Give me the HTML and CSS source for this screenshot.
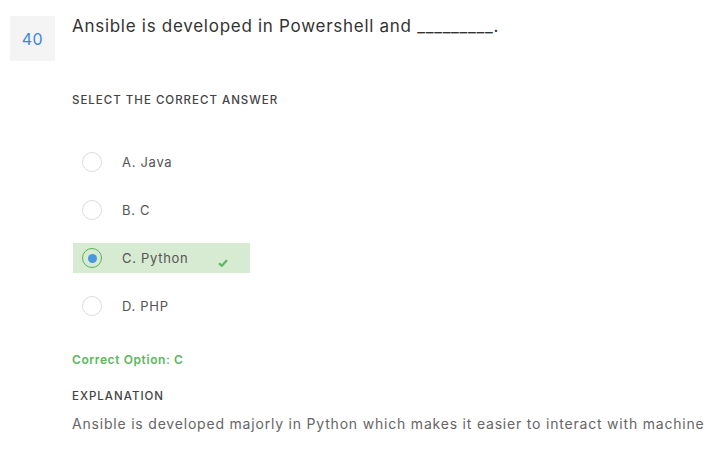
FILE: index.html
```html
<!DOCTYPE html>
<html>
<head>
<meta charset="utf-8">
<link rel="stylesheet" href="styles.css">
</head>
<body>
<div class="question">
  <div class="qnum">40</div>
  <div class="qbody">
    <div class="qtext">Ansible is developed in Powershell and _________.</div>
    <div class="label select-label">SELECT THE CORRECT ANSWER</div>
    <ul class="options">
      <li class="option"><span class="radio"></span><span class="opt-text">A. Java</span></li>
      <li class="option"><span class="radio"></span><span class="opt-text">B. C</span></li>
      <li class="option correct"><span class="radio checked"></span><span class="opt-text">C. Python</span>
        <svg class="check" width="10" height="8" viewBox="0 0 10 8"><path d="M1 4.2 L3.8 6.8 L9 1.2" fill="none" stroke="#5cb85c" stroke-width="2.2"/></svg>
      </li>
      <li class="option"><span class="radio"></span><span class="opt-text">D. PHP</span></li>
    </ul>
    <div class="correct-option">Correct Option: C</div>
    <div class="label expl-label">EXPLANATION</div>
    <div class="expl-text">Ansible is developed majorly in Python which makes it easier to interact with machine</div>
  </div>
</div>
</body>
</html>
```

FILE: styles.css
```css
html, body {
  margin: 0;
  padding: 0;
  background: #ffffff;
  font-family: Inter, "Open Sans", "Liberation Sans", sans-serif;
}
.question {
  display: flex;
  padding: 16px 0 0 10px;
}
.qnum {
  width: 45px;
  height: 45px;
  flex: none;
  background: #f4f4f4;
  color: #3a86e6;
  font-size: 16px;
  letter-spacing: 0.5px;
  display: flex;
  align-items: center;
  justify-content: center;
  margin-right: 17px;
}
.qbody {
  flex: 1;
  min-width: 0;
}
.qtext {
  font-size: 17px;
  line-height: 22px;
  color: #333;
  letter-spacing: 0.72px;
  margin-top: -1px;
  white-space: nowrap;
}
.label {
  font-size: 11.5px;
  font-weight: 500;
  color: #444;
  letter-spacing: 1px;
  line-height: 14px;
}
.select-label {
  margin-top: 56px;
}
.options {
  list-style: none;
  margin: 0;
  padding: 0;
  margin-top: 40px;
}
.option {
  display: flex;
  align-items: center;
  width: 177px;
  height: 30px;
  margin-left: 1px;
  margin-bottom: 18px;
  position: relative;
}
.option.correct {
  background: #d7ead2;
}
.radio {
  width: 18px;
  height: 18px;
  border: 1px solid #dcdcdc;
  border-radius: 50%;
  background: #fff;
  margin-left: 9px;
  margin-right: 20px;
  box-sizing: content-box;
  display: flex;
  align-items: center;
  justify-content: center;
}
.radio.checked {
  border-color: #59b25a;
  background: transparent;
}
.radio.checked::after {
  content: "";
  width: 9px;
  height: 9px;
  border-radius: 50%;
  background: #4a97e0;
}
.opt-text {
  font-size: 13px;
  color: #555;
  letter-spacing: 0.7px;
}
.check {
  position: absolute;
  left: 145px;
  top: 16px;
}
.correct-option {
  margin-top: 31px;
  font-size: 12px;
  font-weight: 600;
  letter-spacing: 0.6px;
  color: #5cb85c;
}
.expl-label {
  margin-top: 22px;
}
.expl-text {
  margin-top: 12px;
  font-size: 14px;
  color: #666;
  letter-spacing: 0.8px;
  white-space: nowrap;
}
```
